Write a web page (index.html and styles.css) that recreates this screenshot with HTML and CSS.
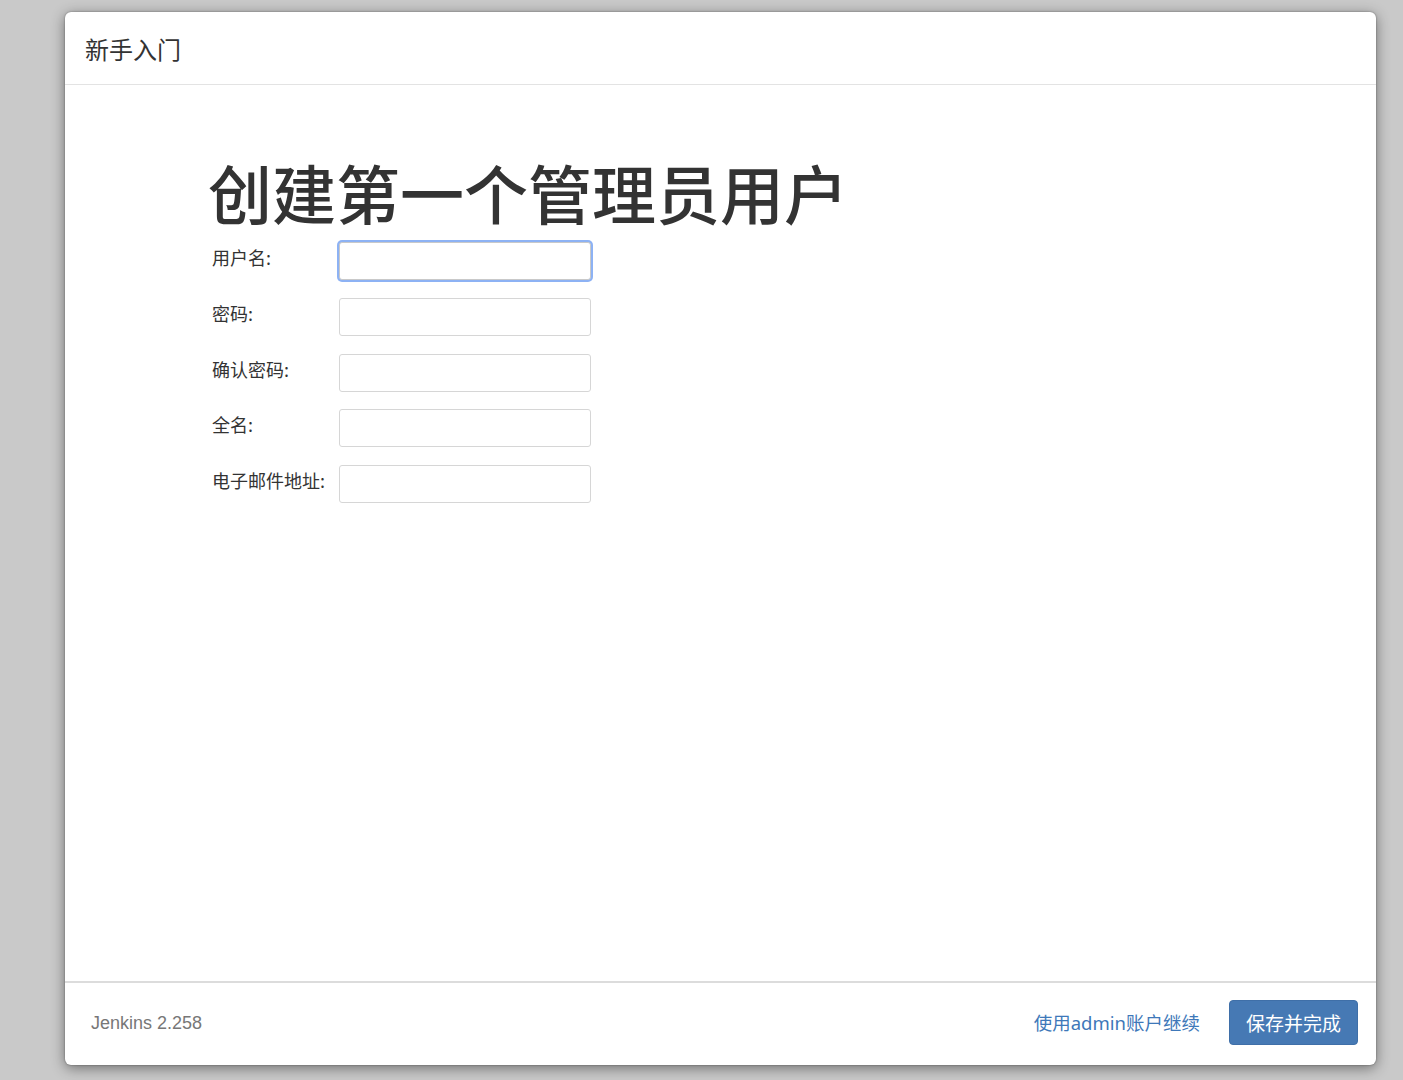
FILE: index.html
```html
<!DOCTYPE html>
<html lang="zh-CN">
<head>
<meta charset="utf-8">
<title>新手入门</title>
<link rel="stylesheet" href="styles.css">
</head>
<body>
<div class="dialog">
  <div class="dialog-header">
    <h4 class="dialog-title">新手入门</h4>
  </div>
  <div class="dialog-body">
    <h1 class="page-title">创建第一个管理员用户</h1>
    <form class="admin-form">
      <label class="field-label" for="username">用户名:</label>
      <input class="field-input focused" id="username" type="text">
      <label class="field-label" for="password1">密码:</label>
      <input class="field-input" id="password1" type="password">
      <label class="field-label" for="password2">确认密码:</label>
      <input class="field-input" id="password2" type="password">
      <label class="field-label" for="fullname">全名:</label>
      <input class="field-input" id="fullname" type="text">
      <label class="field-label" for="email">电子邮件地址:</label>
      <input class="field-input" id="email" type="text">
    </form>
  </div>
  <div class="dialog-footer">
    <div class="version">Jenkins 2.258</div>
    <div class="actions">
      <a class="skip-link" href="#">使用admin账户继续</a>
      <button class="btn-primary" type="button">保存并完成</button>
    </div>
  </div>
</div>
</body>
</html>
```

FILE: styles.css
```css
html, body {
  margin: 0;
  padding: 0;
}
body {
  background: #c9c9c9;
  font-family: "Noto Sans", "Noto Sans CJK SC", sans-serif;
  color: #333;
  width: 1403px;
  height: 1080px;
  overflow: hidden;
}
.dialog {
  box-sizing: border-box;
  margin: 12px 0 0 65px;
  width: 1311px;
  height: 1053px;
  background: #fff;
  border-radius: 6px;
  box-shadow: 0 3px 14px rgba(0, 0, 0, 0.45), 0 0 2px rgba(0, 0, 0, 0.4);
  display: flex;
  flex-direction: column;
  overflow: hidden;
}
.dialog-header {
  height: 72px;
  border-bottom: 1px solid #e3e3e3;
  display: flex;
  align-items: center;
  padding-left: 20px;
  flex: none;
}
.dialog-title {
  margin: 0;
  font-family: "Noto Sans CJK SC", sans-serif;
  font-size: 24px;
  font-weight: 400;
  color: #333;
}
.dialog-body {
  flex: 1;
  padding: 68px 0 0 145px;
}
.page-title {
  margin: 0 0 13px -2px;
  font-family: "Noto Sans CJK SC", sans-serif;
  font-size: 64px;
  font-weight: 500;
  line-height: 76px;
  color: #333;
}
.admin-form {
  display: grid;
  grid-template-columns: 127px 252px;
  row-gap: 17.75px;
  margin-left: 2px;
}
.field-label {
  font-family: "Noto Sans CJK SC", sans-serif;
  font-size: 18px;
  line-height: 26px;
  padding-top: 2px;
  color: #333;
}
.field-input {
  box-sizing: border-box;
  width: 252px;
  height: 38px;
  margin: 0;
  border: 1px solid #d6d6d6;
  border-radius: 3px;
  background: #fff;
  outline: none;
}
.field-input.focused {
  box-shadow: 0 0 0 2px #8db2f4;
  border-color: #c9c9c9;
}
.dialog-footer {
  flex: none;
  box-sizing: border-box;
  height: 84px;
  border-top: 2px solid #dcdcdc;
  display: flex;
  align-items: center;
  justify-content: space-between;
  padding: 0 18px 4px 26px;
}
.version {
  font-family: "Liberation Sans", "Noto Sans", sans-serif;
  font-size: 18px;
  color: #777;
  padding-top: 2px;
}
.actions {
  display: flex;
  align-items: center;
  gap: 29px;
}
.skip-link {
  font-family: "Noto Sans", "Noto Sans CJK SC", sans-serif;
  font-size: 18.5px;
  color: #3e78b9;
  text-decoration: none;
}
.btn-primary {
  font-family: "Noto Sans CJK SC", sans-serif;
  font-size: 19px;
  color: #fff;
  background: #4679b4;
  border: 1px solid #3f6fa8;
  border-radius: 4px;
  height: 45px;
  padding: 0 16px;
  cursor: pointer;
}
```
